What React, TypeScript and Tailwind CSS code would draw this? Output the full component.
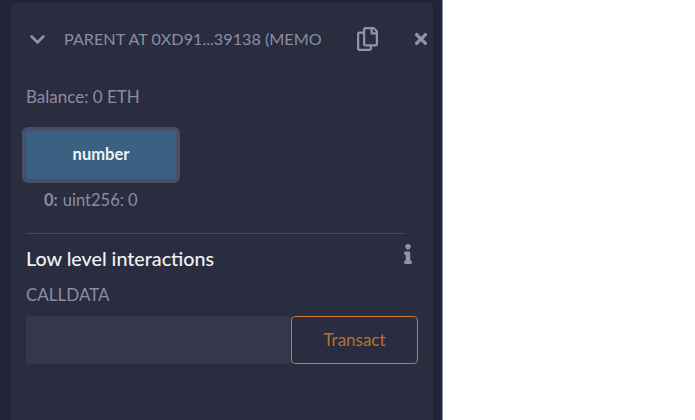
import { FaChevronDown, FaInfo, FaRegCopy, FaTimes } from "react-icons/fa";

export default function App() {
  return (
    <div className="h-[420px] w-[695px] overflow-hidden bg-white font-['Lato','Noto_Sans',sans-serif]">
      <div className="h-full w-[443px] border-r border-[#8b8fa8] bg-[#222336] pl-[11px] pt-[3px]">
        <div className="h-full w-[422px] rounded-t-[2px] bg-[#2a2c3f]">
          <div className="flex h-[50px] items-center pt-[22px] text-[#8f93ad]">
            <FaChevronDown className="ml-[18px] h-[17px] w-[17px]" />
            <div className="ml-[18px] w-[257px] overflow-hidden whitespace-nowrap text-[16.2px] text-[#8a8ea3]">
              PARENT AT 0XD91...39138 (MEMORY)
            </div>
            <FaRegCopy className="ml-[36px] h-[24px] w-[21px]" />
            <FaTimes className="ml-[36px] h-[18px] w-[14px]" />
          </div>

          <div className="pl-[15px]">
            <div className="mt-[34px] h-[20px] text-[17px] leading-[20px] text-[#8a8ea3]">Balance: 0 ETH</div>

            <button className="ml-[-4px] mt-[20px] block h-[56px] w-[158px] rounded-[6px] border-4 border-[#475066] bg-[#3a6182] pb-[2px] text-[16.5px] font-bold text-[#f0f1f5]">
              number
            </button>

            <div className="ml-[18px] mt-[7px] flex h-[20px] items-center gap-[5px] text-[16.5px] leading-[20px] text-[#8a8ea3]">
              <span className="font-bold">0:</span>
              <span>uint256: 0</span>
            </div>

            <div className="mt-[23px] h-px w-[379px] bg-[#45475a]" />

            <div className="mt-[9px] flex h-[30px] w-[386px] items-start justify-between">
              <span className="mt-[4px] text-[19.7px] font-medium leading-[24px] text-[#f0f1f5]">Low level interactions</span>
              <FaInfo className="mt-px h-[20px] w-[8px] text-[#8f93ad]" />
            </div>

            <div className="mt-[12px] h-[20px] text-[17px] leading-[20px] text-[#8a8ea3]">CALLDATA</div>

            <div className="mt-[11px] flex h-[48px] w-[392px]">
              <input className="h-full w-[265px] rounded-l-[3px] bg-[#35384c] outline-none" />
              <button className="h-full w-[127px] rounded-[4px] border border-[#c9792c] pb-px text-[17px] text-[#b8722c]">
                Transact
              </button>
            </div>
          </div>
        </div>
      </div>
    </div>
  );
}
